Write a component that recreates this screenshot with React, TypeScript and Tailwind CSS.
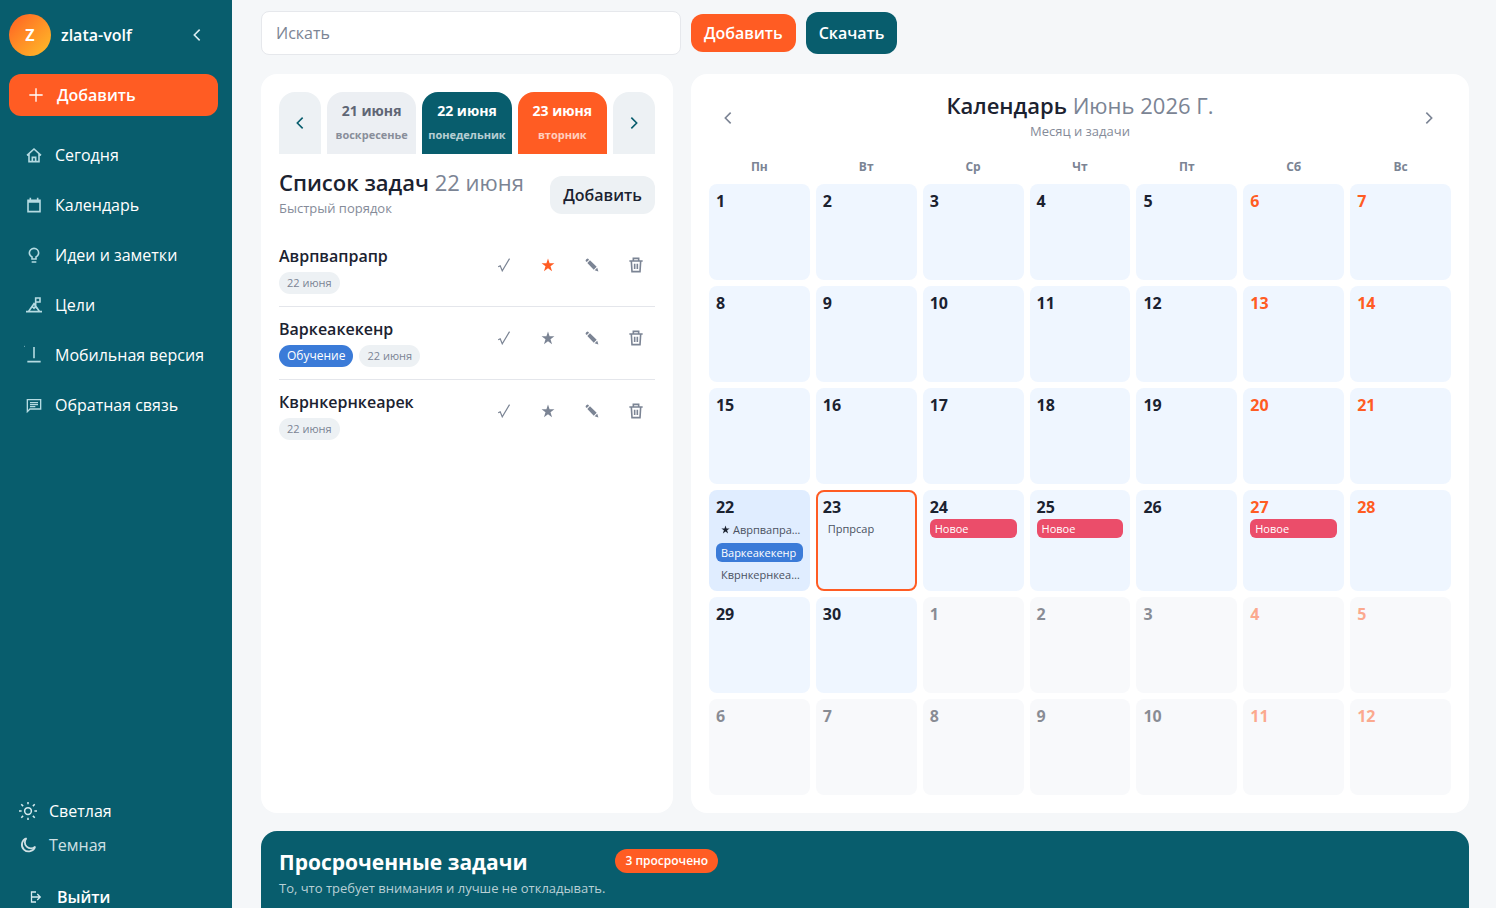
import type { ReactNode } from "react";
import clsx from "clsx";

type IconProps = { className?: string };

function Svg({ className, children }: { className?: string; children: ReactNode }) {
  return (
    <svg
      viewBox="0 0 24 24"
      className={className}
      fill="none"
      stroke="currentColor"
      strokeWidth="2.4"
      aria-hidden="true"
    >
      {children}
    </svg>
  );
}

const HomeIcon = ({ className }: IconProps) => (
  <Svg className={className}>
    <path d="M1.500 12.500 12 3l10.500 9.500M4.500 10v12h15V10M9.500 22v-6.500h5V22" />
  </Svg>
);

const CalendarIcon = ({ className }: IconProps) => (
  <Svg className={className}>
    <path d="M3 5h18v17H3zM3 7.500h18M6.500 1v4M17.500 1v4" />
  </Svg>
);

const BulbIcon = ({ className }: IconProps) => (
  <Svg className={className}>
    <path d="M9 18v-3c-2.500-1.500-4-3.500-4-6a7 7 0 0 1 14 0c0 2.500-1.500 4.500-4 6v3zM8.500 22.500h7" />
  </Svg>
);

const GoalIcon = ({ className }: IconProps) => (
  <Svg className={className}>
    <path d="M0 22h24M3.500 22l8.500-12 8.500 12M9 14l3 3 2-3 2 3M14.500 13V1.500h6.500v6h-6" />
  </Svg>
);

const MobileIcon = ({ className }: IconProps) => (
  <svg
    viewBox="0 0 24 24"
    className={clsx("overflow-visible", className)}
    fill="none"
    stroke="currentColor"
    strokeWidth="2.4"
    aria-hidden="true"
  >
    <path d="M12 0v17M2 22h20" />
    <path d="M-3-1h1" strokeWidth="1.5" />
  </svg>
);

const FeedbackIcon = ({ className }: IconProps) => (
  <Svg className={className}>
    <path d="M2 22V4h20v14H6zM6 8.500h12M6 11.500h12M6 14.500h8" strokeWidth="2" />
  </Svg>
);

const SunIcon = ({ className }: IconProps) => (
  <Svg className={className}>
    <circle cx="12" cy="12" r="4.500" strokeWidth="2" />
    <path
      d="M12 0v3M12 21v3M0 12h3.500M20.500 12H24M3 3l2.500 2.500M18.500 18.500 21 21M3 21l2.500-2.500M18.500 5.500 21 3"
      strokeWidth="2"
    />
  </Svg>
);

const MoonIcon = ({ className }: IconProps) => (
  <Svg className={className}>
    <path d="M21.500 14A9 9 0 1 1 10 3a7.500 7.500 0 0 0 11.500 11z" />
  </Svg>
);

const ExitIcon = ({ className }: IconProps) => (
  <svg
    viewBox="0 0 24 24"
    className={className}
    fill="none"
    stroke="currentColor"
    strokeWidth="2.6"
    aria-hidden="true"
  >
    <path d="M12 2H3v20h9M3 12h18M14.500 6l6 6-6 6" />
  </svg>
);

const PlusIcon = ({ className }: IconProps) => (
  <Svg className={className}>
    <path d="M12 2v20M2 12h20" strokeWidth="2" />
  </Svg>
);

const ChevronLeft = ({ className }: IconProps) => (
  <Svg className={className}>
    <path d="m16 4-8 8 8 8" />
  </Svg>
);

const ChevronRight = ({ className }: IconProps) => (
  <Svg className={className}>
    <path d="m8 4 8 8-8 8" />
  </Svg>
);

const CheckIcon = ({ className }: IconProps) => (
  <Svg className={className}>
    <path d="m2 15 3.500-1.500L9 22 21.500 1" strokeWidth="2" />
  </Svg>
);

const StarIcon = ({ className }: IconProps) => (
  <svg viewBox="0 0 24 24" className={className} fill="currentColor" aria-hidden="true">
    <path d="m12 1 2.700 8H23l-6.700 5 2.600 8.500L12 17.500l-6.900 5L7.700 14 1 9h8.300z" />
  </svg>
);

const PencilIcon = ({ className }: IconProps) => (
  <svg viewBox="0 0 24 24" className={className} fill="currentColor" aria-hidden="true">
    <path d="M1 5c0-2 2-4 4-4l2 2-4 4-2-2zM4 8.500 8.500 4 20 15l-5 5zM21 16.500l2 6.500-6.500-2z" />
  </svg>
);

const TrashIcon = ({ className }: IconProps) => (
  <Svg className={className}>
    <path d="M2 6h20M8 6V2h8v4M5 6l1 16h12l1-16M10 10v8M14 10v8" />
  </Svg>
);

const menu = [
  { title: "Сегодня", Icon: HomeIcon },
  { title: "Календарь", Icon: CalendarIcon },
  { title: "Идеи и заметки", Icon: BulbIcon },
  { title: "Цели", Icon: GoalIcon },
  { title: "Мобильная версия", Icon: MobileIcon },
  { title: "Обратная связь", Icon: FeedbackIcon },
];

const days = [
  { date: "21 июня", name: "воскресенье", style: "bg-[#eceff3] text-[#5f6675]" },
  { date: "22 июня", name: "понедельник", style: "bg-[#085d6d] text-white" },
  { date: "23 июня", name: "вторник", style: "bg-[#ff5c23] text-white" },
];

const tasks = [
  { title: "Аврпвапрапр", tag: "", starred: true },
  { title: "Варкеакекенр", tag: "Обучение", starred: false },
  { title: "Кврнкернкеарек", tag: "", starred: false },
];

const weekdays = ["Пн", "Вт", "Ср", "Чт", "Пт", "Сб", "Вс"];

type CalendarEvent = { title: string; color?: string; starred?: boolean };

const events: Record<number, CalendarEvent[]> = {
  22: [
    { title: "Аврпвапра…", starred: true },
    { title: "Варкеакекенр", color: "bg-[#3b7bd8] text-white" },
    { title: "Кврнкернкеа…" },
  ],
  23: [{ title: "Прпрсар" }],
  24: [{ title: "Новое", color: "bg-[#eb4d6a] text-white" }],
  25: [{ title: "Новое", color: "bg-[#eb4d6a] text-white" }],
  27: [{ title: "Новое", color: "bg-[#eb4d6a] text-white" }],
};

// June starts on Monday, six full weeks are shown
const weeks = Array.from({ length: 6 }, (_, week) =>
  Array.from({ length: 7 }, (_, i) => {
    const n = week * 7 + i + 1;
    return { day: n > 30 ? n - 30 : n, outside: n > 30, weekend: i > 4 };
  })
);

function Sidebar() {
  return (
    <aside className="flex w-[232px] shrink-0 flex-col bg-[#085d6d] pt-3.5 pr-3.5 pl-[9px] text-white">
      <div className="flex items-center gap-2.5">
        <span className="flex size-[42px] items-center justify-center rounded-full bg-linear-135 from-[#ff5c23] to-[#ffbd28] font-bold">
          Z
        </span>
        <span className="flex-1 font-semibold">zlata-volf</span>
        <button type="button" aria-label="Свернуть меню" className="flex size-[42px] items-center justify-center">
          <ChevronLeft className="size-4 text-[#d6ebef]" />
        </button>
      </div>
      <button
        type="button"
        className="mt-[18px] flex h-[42px] shrink-0 items-center gap-3 rounded-xl bg-[#ff5c23] px-[18px] font-semibold"
      >
        <span className="flex w-[18px] justify-center">
          <PlusIcon className="size-4" />
        </span>
        Добавить
      </button>
      <nav className="mt-[18px] flex flex-col gap-2">
        {menu.map(({ title, Icon }) => (
          <a key={title} href="#" className="flex h-[42px] items-center gap-3 pl-4 whitespace-nowrap">
            <span className="flex w-[18px] justify-center">
              <Icon className="size-4 text-[#b5dbe2]" />
            </span>
            {title}
          </a>
        ))}
      </nav>
      <div className="mt-auto">
        <button type="button" className="flex h-[34px] items-center gap-3 pl-2.5">
          <SunIcon className="size-[18px] text-[#d6ebef]" />
          Светлая
        </button>
        <button type="button" className="flex h-[34px] items-center gap-3 pl-2.5 text-[#cfe0e4]">
          <MoonIcon className="size-[18px]" />
          Темная
        </button>
        <button type="button" className="mt-6 flex h-[22px] items-center gap-3 pl-[18px] font-semibold">
          <span className="flex w-[18px] justify-center">
            <ExitIcon className="size-3 text-[#d6ebef]" />
          </span>
          Выйти
        </button>
      </div>
    </aside>
  );
}

function TaskList() {
  return (
    <section className="rounded-2xl bg-white p-[18px]">
      <div className="flex h-[62px] gap-1.5">
        <button
          type="button"
          aria-label="Предыдущий день"
          className="flex w-[42px] items-center justify-center rounded-t-2xl bg-[#edf1f4] text-[#085d6d]"
        >
          <ChevronLeft className="size-4" />
        </button>
        {days.map((d) => (
          <button
            key={d.date}
            type="button"
            className={clsx("min-w-0 flex-1 rounded-t-2xl font-bold", d.style)}
          >
            <span className="block text-sm leading-6">{d.date}</span>
            <span className="block text-[11px] leading-6 opacity-70">{d.name}</span>
          </button>
        ))}
        <button
          type="button"
          aria-label="Следующий день"
          className="flex w-[42px] items-center justify-center rounded-t-2xl bg-[#edf1f4] text-[#085d6d]"
        >
          <ChevronRight className="size-4" />
        </button>
      </div>
      <div className="mt-[15px] flex items-center justify-between">
        <div>
          <h2 className="text-[22px] leading-[26px] font-semibold">
            Список задач <span className="font-medium text-[#7b8494]">22 июня</span>
          </h2>
          <p className="text-[13px] leading-[26px] text-[#858b99]">Быстрый порядок</p>
        </div>
        <button type="button" className="h-[38px] rounded-xl bg-[#edf1f4] px-[13px] font-semibold">
          Добавить
        </button>
      </div>
      <ul className="mt-[13px] divide-y divide-[#e4e6eb]">
        {tasks.map((task) => (
          <li key={task.title} className="flex items-start justify-between py-3">
            <div>
              <h3 className="leading-5 font-semibold">{task.title}</h3>
              <div className="mt-1.5 flex gap-1.5 leading-[22px]">
                {task.tag && <span className="rounded-full bg-[#3b7bd8] px-2 text-xs leading-[22px] text-white">{task.tag}</span>}
                <span className="rounded-full bg-[#edf1f4] px-2 text-[11px] text-[#7b8494]">22 июня</span>
              </div>
            </div>
            <div className="flex gap-1.5 text-[#7b8494]">
              <button type="button" aria-label="Выполнить" className="flex size-[38px] items-center justify-center">
                <CheckIcon className="size-3.5" />
              </button>
              <button
                type="button"
                aria-label="Важная"
                className={clsx("flex size-[38px] items-center justify-center", task.starred && "text-[#ff5c23]")}
              >
                <StarIcon className="size-3.5" />
              </button>
              <button type="button" aria-label="Изменить" className="flex size-[38px] items-center justify-center">
                <PencilIcon className="size-3.5" />
              </button>
              <button type="button" aria-label="Удалить" className="flex size-[38px] items-center justify-center">
                <TrashIcon className="size-4" />
              </button>
            </div>
          </li>
        ))}
      </ul>
    </section>
  );
}

function Calendar() {
  return (
    <section className="rounded-2xl bg-white p-[18px]">
      <div className="flex items-center justify-between">
        <button type="button" aria-label="Предыдущий месяц" className="flex size-[38px] items-center justify-center">
          <ChevronLeft className="size-4 text-[#7b8494]" />
        </button>
        <div className="text-center">
          <h2 className="text-[22px] leading-[26px] font-semibold">
            Календарь <span className="font-medium text-[#7b8494]">Июнь 2026 Г.</span>
          </h2>
          <p className="text-[13px] leading-[26px] text-[#858b99]">Месяц и задачи</p>
        </div>
        <button type="button" aria-label="Следующий месяц" className="flex size-[38px] items-center pl-2">
          <ChevronRight className="size-4 text-[#7b8494]" />
        </button>
      </div>
      <table className="mt-3 block">
        <thead className="block">
          <tr className="grid grid-cols-7 gap-1.5">
            {weekdays.map((day) => (
              <th key={day} className="text-xs leading-[22px] font-bold text-[#7b8494]">
                {day}
              </th>
            ))}
          </tr>
        </thead>
        <tbody className="mt-1.5 flex flex-col gap-1.5">
          {weeks.map((week, index) => (
            <tr key={index} className="grid grid-cols-7 gap-1.5">
              {week.map(({ day, outside, weekend }) => {
                const today = !outside && day === 23;
                return (
                  <td
                    key={day}
                    className={clsx(
                      "min-h-24 min-w-0 rounded-lg",
                      today ? "border-2 border-[#ff5c23] p-[5px]" : "p-[7px]",
                      outside ? "bg-[#f8f9fb]" : day === 22 ? "bg-[#e0edff]" : "bg-[#eff6ff]"
                    )}
                  >
                    <div
                      className={clsx(
                        "pb-0.5 leading-5 font-bold",
                        weekend && "text-[#ff5c23]",
                        outside && "opacity-50"
                      )}
                    >
                      {day}
                    </div>
                    <div className="flex flex-col gap-[3px] text-[11px] leading-[19px]">
                      {!outside &&
                        events[day]?.map((event) => (
                          <div
                            key={event.title}
                            className={clsx(
                              "rounded-md pl-[5px] whitespace-nowrap",
                              event.starred && "leading-[21px]",
                              event.color ?? "text-[#4a5261]"
                            )}
                          >
                            {event.starred && (
                              <StarIcon className="mr-[3px] inline size-[9px] align-baseline text-[#1b2230]" />
                            )}
                            {event.title}
                          </div>
                        ))}
                    </div>
                  </td>
                );
              })}
            </tr>
          ))}
        </tbody>
      </table>
    </section>
  );
}

export default function App() {
  return (
    <div className="flex h-screen overflow-hidden bg-[#f5f7f9] font-['Open_Sans',sans-serif] text-base text-[#1b2230]">
      <Sidebar />
      <main className="min-w-0 flex-1 overflow-y-auto pt-[11px] pr-[27px] pl-[29px] [scrollbar-width:none]">
        <div className="flex items-center gap-2.5">
          <input
            type="search"
            aria-label="Искать"
            placeholder="Искать"
            className="h-11 w-[420px] rounded-lg border border-[#e6e8ec] bg-white px-3.5 placeholder:text-[#7b8494]"
          />
          <button type="button" className="h-[38px] rounded-xl bg-[#ff5c23] px-[13px] font-semibold text-white">
            Добавить
          </button>
          <button type="button" className="h-[42px] rounded-xl bg-[#085d6d] px-[13px] font-semibold text-white">
            Скачать
          </button>
        </div>

        <div className="mt-[19px] grid grid-cols-[minmax(0,9fr)_minmax(0,17fr)] gap-[18px]">
          <TaskList />
          <Calendar />
        </div>

        {/* Overdue tasks */}
        <section className="mt-[18px] min-h-40 rounded-2xl bg-[#085d6d] p-[18px] text-white">
          <div className="flex items-start gap-2.5">
            <div>
              <h2 className="text-[21px] leading-[26px] font-bold">Просроченные задачи</h2>
              <p className="text-[13px] leading-[26px] text-[#b8d0d5]">
                То, что требует внимания и лучше не откладывать.
              </p>
            </div>
            <span className="rounded-full bg-[#ff5c23] px-2.5 text-xs leading-6 font-semibold">3 просрочено</span>
          </div>
        </section>
      </main>
    </div>
  );
}
